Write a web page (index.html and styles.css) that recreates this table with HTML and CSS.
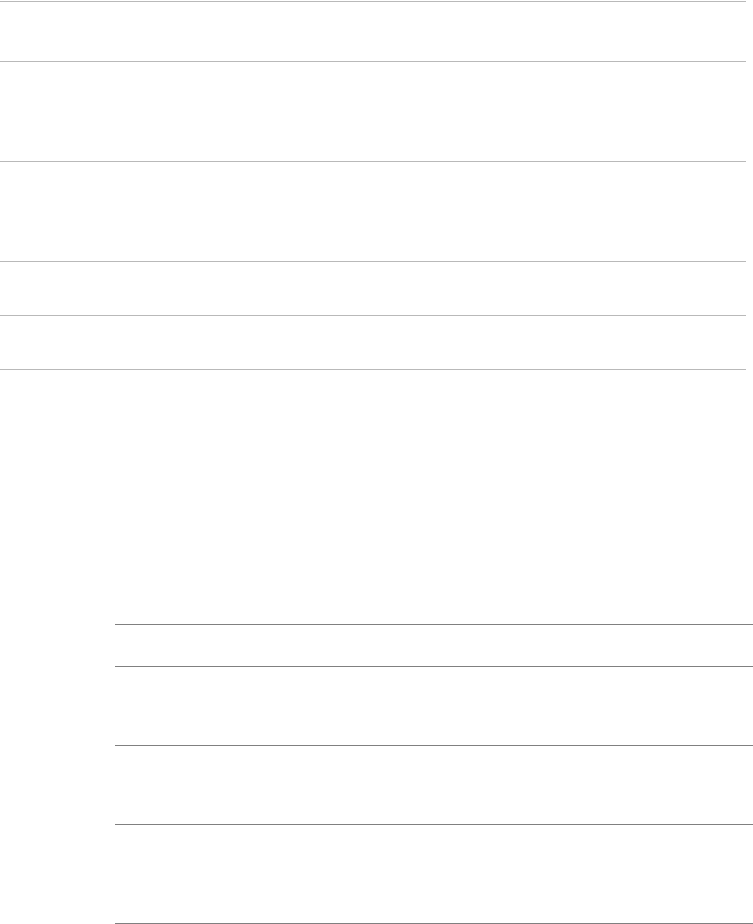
FILE: index.html
```html
<!DOCTYPE html>
<html lang="en">
<head>
    <meta charset="UTF-8">
    <meta name="viewport" content="width=device-width, initial-scale=1.0">
    <title>Rows</title>
    <link rel="stylesheet" href="styles.css">
</head>
<body>

    <!-- Upper list -->
    <div class="list list-top">
        <div class="row row-60"></div>
        <div class="row row-100"></div>
        <div class="row row-100"></div>
        <div class="row row-54"></div>
        <div class="row row-54"></div>
    </div>

    <!-- Lower list, indented -->
    <div class="list list-bottom">
        <div class="row row-42"></div>
        <div class="row row-79"></div>
        <div class="row row-79"></div>
        <div class="row row-99"></div>
    </div>

</body>
</html>
```

FILE: styles.css
```css
/* General Styles */
body {
    margin: 0;
    padding: 0;
    background-color: #ffffff;
    font-family: 'Liberation Sans', sans-serif;
}

.list {
    display: flex;
    flex-direction: column;
}

.row {
    border-top: 1px solid;
}

.row:last-child {
    border-bottom: 1px solid;
}

/* Upper list */
.list-top {
    width: 746px;
    margin-top: 1px;
}

.list-top .row {
    border-color: #b9b9b9;
}

.row-60 { height: 59px; }
.row-100 { height: 99px; }
.row-54 { height: 53px; }

/* Lower list */
.list-bottom {
    margin-top: 254px;
    margin-left: 115px;
}

.list-bottom .row {
    border-color: #808080;
}

.row-42 { height: 41px; }
.row-79 { height: 78px; }
.row-99 { height: 98px; }
```
